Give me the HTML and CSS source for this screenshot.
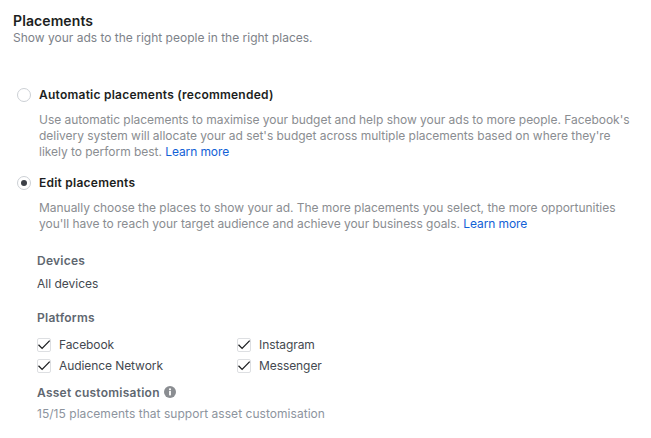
FILE: index.html
```html
<!DOCTYPE html>
<html lang="en">
<head>
  <meta charset="UTF-8"/>
  <title>Placements</title>
  <link rel="stylesheet" href="styles.css">
</head>
<body>
  <div class="container">
    <h2>Placements</h2>
    <div class="subtitle">Show your ads to the right people in the right places.</div>

    <div class="option first">
      <span class="radio"></span>
      <div class="option-title">Automatic placements (recommended)</div>
    </div>
    <p class="option-desc">Use automatic placements to maximise your budget and help show your ads to more people. Facebook's<br>delivery system will allocate your ad set's budget across multiple placements based on where they're<br>likely to perform best. <a href="#">Learn more</a></p>

    <div class="option">
      <span class="radio checked"></span>
      <div class="option-title">Edit placements</div>
    </div>
    <p class="option-desc">Manually choose the places to show your ad. The more placements you select, the more opportunities<br>you'll have to reach your target audience and achieve your business goals. <a href="#">Learn more</a></p>

    <div class="details">
      <div class="field-title devices">Devices</div>
      <div class="field-value">All devices</div>

      <div class="field-title platforms">Platforms</div>
      <div class="check-grid">
        <label class="check"><span class="box"><svg viewBox="0 0 14 14"><path d="M1.5 6.8l3.6 3.6 7.6-7.8"/></svg></span>Facebook</label>
        <label class="check"><span class="box"><svg viewBox="0 0 14 14"><path d="M1.5 6.8l3.6 3.6 7.6-7.8"/></svg></span>Instagram</label>
        <label class="check"><span class="box"><svg viewBox="0 0 14 14"><path d="M1.5 6.8l3.6 3.6 7.6-7.8"/></svg></span>Audience Network</label>
        <label class="check"><span class="box"><svg viewBox="0 0 14 14"><path d="M1.5 6.8l3.6 3.6 7.6-7.8"/></svg></span>Messenger</label>
      </div>

      <div class="field-title asset">Asset customisation
        <svg class="info" viewBox="0 0 12 12"><circle cx="6" cy="6" r="6"/><rect x="5.1" y="5" width="1.8" height="4.4"/><circle class="dot" cx="6" cy="3.3" r="1.1"/></svg>
      </div>
      <div class="asset-note">15/15 placements that support asset customisation</div>
    </div>
  </div>
</body>
</html>
```

FILE: styles.css
```css
body { font-family: Inter, 'Noto Sans', Arial, sans-serif; background: #fff; color: #1c1e21; margin: 0; padding: 0; font-size: 12px; line-height: 16px; }
.container { padding: 13px 13px 0 13px; }
h2 { margin: 0; font-size: 14px; line-height: 16px; font-weight: 600; color: #1c1e21; letter-spacing: 0.1px; }
.subtitle { color: #7d8289; margin-top: 1px; }
.option { display: flex; align-items: center; margin-top: 15px; margin-left: 4px; height: 16px; }
.option.first { margin-top: 41px; }
.radio { width: 14px; height: 14px; box-sizing: border-box; border: 1px solid #ccd0d5; border-radius: 50%; margin-right: 8px; display: flex; align-items: center; justify-content: center; background: #fff; }
.radio.checked::after { content: ""; width: 6px; height: 6px; border-radius: 50%; background: #3c4047; }
.option-title { font-weight: 600; color: #1c1e21; letter-spacing: 0.24px; }
.option-desc { margin: 9px 0 0 26px; color: #8a8d91; white-space: nowrap; letter-spacing: -0.03px; }
.option-desc a { color: #1261d6; text-decoration: none; letter-spacing: -0.1px; }
.details { margin-left: 24px; }
.field-title { font-weight: 600; color: #606770; letter-spacing: 0.25px; }
.devices { margin-top: 21px; }
.field-value { margin-top: 7px; color: #444950; }
.platforms { margin-top: 18px; }
.check-grid { display: grid; grid-template-columns: 200px 200px; row-gap: 5px; margin-top: 11px; }
.check { display: flex; align-items: center; color: #444950; height: 16px; letter-spacing: -0.08px; }
.box { width: 14px; height: 14px; box-sizing: border-box; border: 1px solid #dddfe2; border-radius: 2px; margin-right: 8px; background: #fff; }
.box svg { display: block; width: 14px; height: 14px; margin: -1px; fill: none; stroke: #1c1e21; stroke-width: 1.3; }
.asset { margin-top: 11px; display: flex; align-items: center; gap: 4px; }
.info { width: 12px; height: 12px; fill: #8a8d91; margin-top: -3px; }
.info rect, .info .dot { fill: #fff; }
.asset-note { margin-top: 5px; color: #8d949e; letter-spacing: 0.04px; }
```
